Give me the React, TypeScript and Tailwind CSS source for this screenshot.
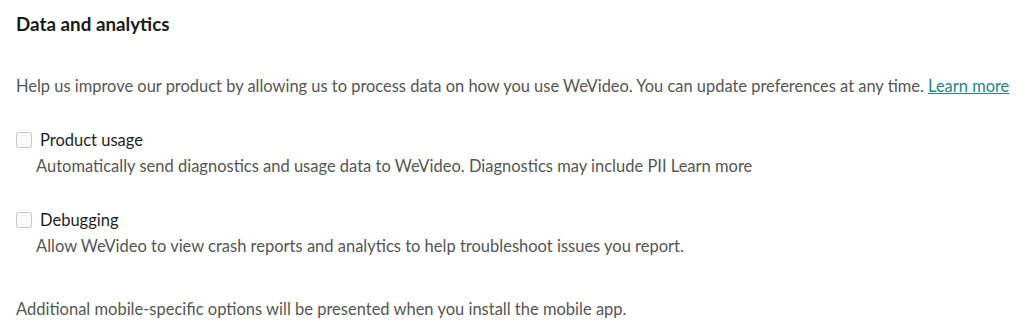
import React from 'react'

function Option({ label, desc }: { label: string; desc: string }) {
  return (
    <div className="flex flex-col">
      <label className="flex h-[20px] items-center gap-[8px]">
        <span className="h-[16px] w-[16px] shrink-0 rounded-[3px] border border-[#c8c8c8] bg-[#fafafa]" />
        <span className="text-[16.5px] text-[#1f1f1f]">{label}</span>
      </label>
      <p className="mt-[6px] pl-[20px] text-[16.5px] leading-[20px] text-[#555]">{desc}</p>
    </div>
  )
}

export default function App() {
  return (
    <main className="h-[329px] w-[1024px] overflow-hidden bg-white px-4 pt-[13px] font-['Lato',sans-serif]">
      <h2 className="text-[18.8px] font-bold leading-[22px] text-[#1a1a1a]">Data and analytics</h2>
      <p className="mt-[41px] whitespace-nowrap text-[16.45px] leading-[20px] text-[#555]">
        Help us improve our product by allowing us to process data on how you use WeVideo. You can update preferences at any time.{' '}
        <a className="text-[#2a7f8e] underline">Learn more</a>
      </p>
      <div className="mt-[34px] flex flex-col gap-[34px]">
        <Option
          label="Product usage"
          desc="Automatically send diagnostics and usage data to WeVideo. Diagnostics may include PII Learn more"
        />
        <Option
          label="Debugging"
          desc="Allow WeVideo to view crash reports and analytics to help troubleshoot issues you report."
        />
      </div>
      <p className="mt-[43px] text-[16.5px] leading-[20px] text-[#555]">
        Additional mobile-specific options will be presented when you install the mobile app.
      </p>
    </main>
  )
}
